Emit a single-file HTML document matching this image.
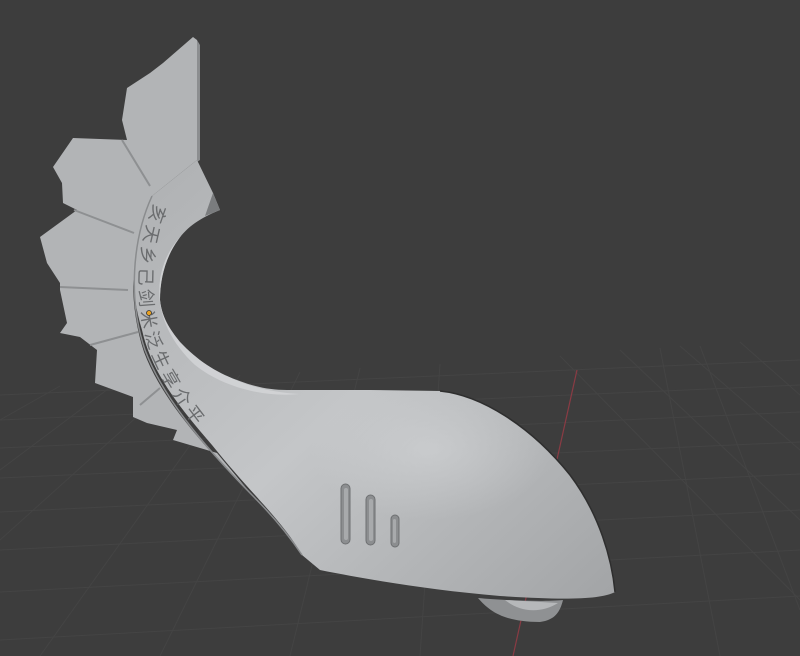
<!DOCTYPE html>
<html><head><meta charset="utf-8"><style>
html,body{margin:0;padding:0;background:#3d3d3d;width:800px;height:656px;overflow:hidden}
svg{display:block}
</style></head><body>
<svg width="800" height="656" viewBox="0 0 800 656" xmlns="http://www.w3.org/2000/svg">
<defs>
<linearGradient id="body" x1="0" y1="0" x2="1" y2="1">
<stop offset="0" stop-color="#aeb0b2"/><stop offset="0.5" stop-color="#c4c6c8"/><stop offset="1" stop-color="#a2a4a6"/>
</linearGradient>
<radialGradient id="neckhl" cx="0.5" cy="0.5" r="0.5">
<stop offset="0" stop-color="#d2d4d6"/><stop offset="1" stop-color="#d2d4d6" stop-opacity="0"/>
</radialGradient>
<path id="bodyp" d="M197 160 L213 193 L220 210 C200 218 187 227 178 240 C165 258 160 280 160 300 C162 320 173 333 180 342 C197 360 215 372 237 380 C255 387 270 390 287 390 L370 390 L440 391 C480 395 530 425 570 475 C600 515 612 560 615 592 C600 600 560 600 500 596 C430 590 370 580 320 570 L302 555 C282 520 252 495 212 445 C182 410 152 375 142 330 C127 280 130 230 152 196 Z"/>
<clipPath id="bc"><use href="#bodyp"/></clipPath>
<path id="arc" d="M157 198 C137 242 133 300 150 350 C167 395 203 440 257 495 C282 520 297 540 307 555"/>
</defs>
<rect width="800" height="656" fill="#3d3d3d"/>
<g stroke="#444" stroke-width="1" fill="none">
<path d="M0 395 L800 360"/><path d="M0 420 L800 385"/><path d="M0 448 L800 412"/><path d="M0 478 L800 442"/>
<path d="M0 512 L800 474"/><path d="M0 550 L800 510"/><path d="M0 592 L800 550"/><path d="M0 640 L800 596"/>
<path d="M620 350 L800 520"/><path d="M560 356 L800 600"/><path d="M680 346 L800 450"/><path d="M740 342 L800 395"/>
<path d="M120 380 L0 470"/><path d="M180 378 L0 540"/><path d="M60 386 L0 420"/><path d="M240 375 L40 656"/>
<path d="M300 372 L160 656"/><path d="M360 368 L290 656"/><path d="M440 364 L420 656"/><path d="M660 348 L720 656"/>
<path d="M700 346 L800 610"/>
</g>
<line x1="577" y1="370" x2="513" y2="656" stroke="#8a3b44" stroke-width="1.2"/>
<!-- fan petals -->
<path d="M193 37 L163 63 L150 73 L127 88 L122 120 L127 140 L73 138 L53 167 L62 183 L63 203 L77 210 L40 237 L47 263 L60 283 L60 290 L67 323 L60 333 L80 337 L97 350 L95 383 L133 397 L133 417 L147 423 L177 430 L173 440 L217 453 L252 495 C197 440 160 395 144 352 C127 300 130 240 152 196 L197 160 L197 40 Z" fill="#b2b4b6"/>
<path d="M197 40 L200 45 L200 160 L197 162 Z" fill="#8c8e90"/>
<g stroke="#8e9092" stroke-width="2" fill="none">
<path d="M122 140 L150 186"/><path d="M74 210 L134 233"/><path d="M60 287 L128 290"/><path d="M90 345 L138 332"/><path d="M140 405 L160 388"/>
</g>
<!-- body -->
<use href="#bodyp" fill="url(#body)"/>
<g clip-path="url(#bc)">
<ellipse cx="430" cy="450" rx="120" ry="70" fill="url(#neckhl)" opacity="0.6"/>
<path d="M220 210 C195 222 175 245 168 275 C163 305 172 330 195 355 C225 380 260 392 300 394 C260 398 220 385 195 365 C168 340 156 310 160 280 C165 245 190 222 220 210 Z" fill="#d4d6d8" opacity="0.8"/>
</g>
<path d="M213 193 L220 210 L205 216 Z" fill="#7a7c7e"/>
<!-- band groove (outer) -->
<path d="M152 196 C132 240 128 300 145 350 C162 395 198 440 252 495 C277 520 292 540 302 555" stroke="#8a8c8e" stroke-width="1.5" fill="none"/>
<text font-family="'Liberation Sans','Noto Sans CJK SC',sans-serif" font-size="18" fill="#6a6c6e" letter-spacing="4"><textPath href="#arc" startOffset="6">亥天乡己剑米泛生享介平</textPath></text>
<!-- slots -->
<g fill="#8c8e90" stroke="#6e7072" stroke-width="1">
<rect x="341" y="484" width="9" height="60" rx="4.5"/>
<rect x="366" y="495" width="9" height="50" rx="4.5"/>
<rect x="391" y="515" width="8" height="32" rx="4"/>
</g>
<g fill="#a8aaac"><rect x="344" y="488" width="4" height="52" rx="2"/><rect x="369" y="499" width="4" height="42" rx="2"/><rect x="393" y="519" width="3" height="24" rx="1.5"/></g>
<!-- foot -->
<path d="M478 598 C490 612 505 622 540 622 C555 620 560 612 563 600 C540 602 500 600 478 598 Z" fill="#8f9193"/>
<path d="M505 600 C520 612 540 614 558 603 Z" fill="#b6b8ba"/>
<path d="M440 391 C480 395 530 425 570 475 C600 515 612 560 615 592" stroke="#2e2e2e" stroke-width="1.5" fill="none"/>
<circle cx="149" cy="313" r="2.5" fill="#e8a020" stroke="#333" stroke-width="0.8"/>
</svg>
</body></html>
